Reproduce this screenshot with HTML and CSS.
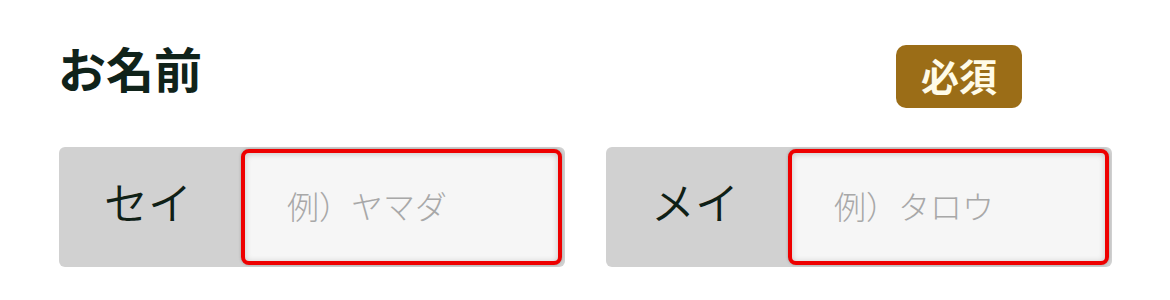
FILE: index.html
```html
<!DOCTYPE html>
<html lang="ja">
<head>
<meta charset="utf-8">
<link rel="stylesheet" href="styles.css">
</head>
<body>
<div class="form">
  <div class="head">
    <h2 class="title">お名前</h2>
    <span class="badge">必須</span>
  </div>
  <div class="fields">
    <div class="field">
      <label class="label" for="sei">セイ</label>
      <input class="input" id="sei" type="text" placeholder="例）ヤマダ">
    </div>
    <div class="field">
      <label class="label" for="mei">メイ</label>
      <input class="input" id="mei" type="text" placeholder="例）タロウ">
    </div>
  </div>
</div>
</body>
</html>
```

FILE: styles.css
```css
html, body {
  margin: 0;
  padding: 0;
  background: #ffffff;
}
body {
  font-family: "Noto Sans CJK JP", "Noto Sans", sans-serif;
  color: #13251b;
}
.form {
  width: 1053px;
  padding: 45px 0 0 59px;
}
.head {
  display: flex;
  align-items: center;
  justify-content: space-between;
  width: 963px;
  height: 63px;
}
.title {
  margin: 0;
  font-size: 48px;
  font-weight: 700;
  line-height: 1;
  color: #10231a;
  margin-top: -20px;
  margin-left: -1px;
}
.badge {
  display: flex;
  align-items: center;
  justify-content: center;
  width: 126px;
  height: 63px;
  border-radius: 10px;
  background: #9b6d17;
  color: #fffbe8;
  font-size: 38px;
  font-weight: 700;
  line-height: 1;
  padding-bottom: 3px;
  box-sizing: border-box;
}
.fields {
  display: flex;
  gap: 41px;
  margin-top: 39px;
}
.field {
  display: flex;
  width: 506px;
  height: 120px;
  background: #d1d1d1;
  border-radius: 6px;
}
.label {
  display: flex;
  align-items: center;
  justify-content: center;
  width: 182px;
  flex: none;
  font-size: 44px;
  font-weight: 350;
  color: #0f2016;
  padding: 0 4px 12px 0;
  box-sizing: border-box;
}
.input {
  flex: 1;
  min-width: 0;
  box-sizing: border-box;
  height: 116px;
  margin: 2px 3px 2px 0;
  border: 4px solid #ee0000;
  border-radius: 8px;
  background: #f6f6f6;
  box-shadow: 0 0 3px rgba(0, 0, 0, 0.25), inset 0 1px 6px rgba(0, 0, 0, 0.2);
  padding: 0 0 4px 42px;
  font-family: "Noto Sans CJK JP", "Noto Sans", sans-serif;
  font-size: 32px;
  font-weight: 300;
  color: #333;
  outline: none;
}
.input::placeholder {
  color: #a8a8a8;
  opacity: 1;
}
```
